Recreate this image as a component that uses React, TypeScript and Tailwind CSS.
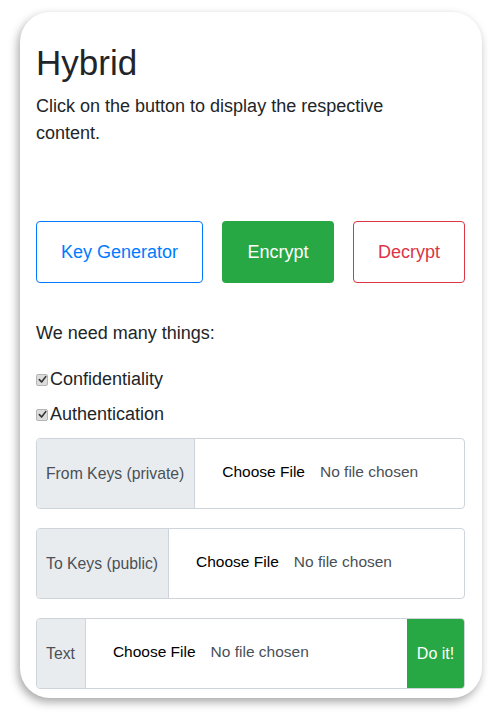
const font = "font-['Liberation_Sans',Arial,sans-serif]";

const Check = ({ label }: { label: string }) => (
    <label className="flex items-center h-[27px] text-[18px] leading-[27px] text-[#212529]">
        <span className="flex items-center justify-center size-[12px] rounded-[2px] border border-[#b5b5b5] bg-[#dcdcdc] mr-[2px]">
            <svg width="9" height="9" viewBox="0 0 10 10">
                <path d="M1.5 5.2 L4 7.8 L8.6 1.8" fill="none" stroke="#333" strokeWidth="1.8" strokeLinecap="round" strokeLinejoin="round" />
            </svg>
        </span>
        {label}
    </label>
);

const FileGroup = ({ label, action }: { label: string; action?: boolean }) => (
    <div className="flex h-[71px] rounded-[4px] border border-[#ced4da] overflow-hidden">
        <div className="flex items-center pl-[9px] pr-[10px] bg-[#e9ecef] border-r border-[#ced4da] text-[15.75px] text-[#495057]">
            {label}
        </div>
        <div className="flex flex-1 items-center pl-[27px] pb-[3px] text-[15.5px]">
            <span className="text-black">Choose File</span>
            <span className="ml-[15px] text-[#495057]">No file chosen</span>
        </div>
        {action && (
            <div className="flex items-center justify-center w-[57px] bg-[#28a745] text-white text-[16px]">
                Do it!
            </div>
        )}
    </div>
);

export default function App() {
    return (
        <div className={`w-[501px] h-[716px] bg-white pt-[12px] pl-[20px] ${font}`}>
            <div className="w-[462px] h-[686px] rounded-[30px] bg-white shadow-[-2px_4px_10px_rgba(0,0,0,0.35)] pt-[30px] pl-[16px] pr-[17px]">
                <h1 className="text-[35px] leading-[42px] text-[#212529] mb-[9px]">Hybrid</h1>
                <p className="text-[18px] leading-[27px] text-[#212529] w-[380px]">
                    Click on the button to display the respective content.
                </p>

                <div className="flex gap-[19px] mt-[74px]">
                    <div className="flex items-center justify-center w-[167px] h-[62px] rounded-[4px] border border-[#007bff] text-[#007bff] text-[18px]">
                        Key Generator
                    </div>
                    <div className="flex items-center justify-center w-[112px] h-[62px] rounded-[4px] bg-[#28a745] text-white text-[18px]">
                        Encrypt
                    </div>
                    <div className="flex items-center justify-center w-[112px] h-[62px] rounded-[4px] border border-[#dc3545] text-[#dc3545] text-[18px]">
                        Decrypt
                    </div>
                </div>

                <p className="mt-[37px] text-[18px] leading-[27px] text-[#212529]">We need many things:</p>

                <div className="flex flex-col gap-[8px] mt-[19px]">
                    <Check label="Confidentiality" />
                    <Check label="Authentication" />
                </div>

                <div className="flex flex-col gap-[19px] mt-[10px]">
                    <FileGroup label="From Keys (private)" />
                    <FileGroup label="To Keys (public)" />
                    <FileGroup label="Text" action />
                </div>
            </div>
        </div>
    );
}
